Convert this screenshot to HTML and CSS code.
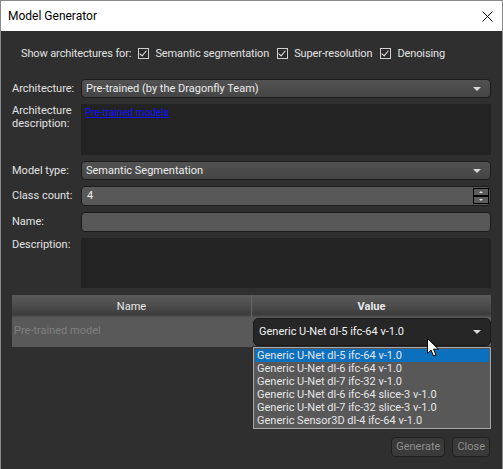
FILE: index.html
```html
<!DOCTYPE html>
<html lang="en">
<head>
    <meta charset="UTF-8">
    <title>Model Generator</title>
    <link rel="stylesheet" href="styles.css">
</head>
<body>
    <div class="window">
        <!-- title bar -->
        <div class="titlebar">
            <span class="title">Model Generator</span>
            <svg class="close" width="11" height="11" viewBox="0 0 11 11">
                <path d="M0.5 0.5 L10.5 10.5 M10.5 0.5 L0.5 10.5" stroke="#000" stroke-width="1"/>
            </svg>
        </div>

        <div class="content">
            <!-- filters -->
            <div class="filters">
                <span>Show architectures for:</span>
                <label class="check"><span class="box"></span>Semantic segmentation</label>
                <label class="check"><span class="box"></span>Super-resolution</label>
                <label class="check"><span class="box"></span>Denoising</label>
            </div>

            <!-- form -->
            <div class="form">
                <div class="label">Architecture:</div>
                <div class="combo">Pre-trained (by the Dragonfly Team)<span class="arrow"></span></div>

                <div class="label top">Architecture description:</div>
                <div class="textarea"><a href="#">Pre-trained models</a></div>

                <div class="label">Model type:</div>
                <div class="combo">Semantic Segmentation<span class="arrow"></span></div>

                <div class="label">Class count:</div>
                <div class="input spin">4
                    <div class="spin-buttons">
                        <div class="spin-btn up"></div>
                        <div class="spin-btn down"></div>
                    </div>
                </div>

                <div class="label">Name:</div>
                <div class="input"></div>

                <div class="label top">Description:</div>
                <div class="textarea"></div>
            </div>

            <!-- parameter table -->
            <div class="table">
                <div class="th">Name</div>
                <div class="th bold">Value</div>
                <div class="td muted">Pre-trained model</div>
                <div class="td cell-combo">
                    <div class="combo dark">Generic U-Net dl-5 ifc-64 v-1.0<span class="arrow"></span></div>
                    <ul class="popup">
                        <li class="selected">Generic U-Net dl-5 ifc-64 v-1.0</li>
                        <li>Generic U-Net dl-6 ifc-64 v-1.0</li>
                        <li>Generic U-Net dl-7 ifc-32 v-1.0</li>
                        <li>Generic U-Net dl-6 ifc-64 slice-3 v-1.0</li>
                        <li>Generic U-Net dl-7 ifc-32 slice-3 v-1.0</li>
                        <li>Generic Sensor3D dl-4 ifc-64 v-1.0</li>
                    </ul>
                    <svg class="cursor" width="13" height="20" viewBox="0 0 13 20">
                        <path d="M0.5 0.5 L0.5 15.5 L4 12 L6.5 18 L9 17 L6.5 11.2 L11.5 11.2 Z" fill="#fff" stroke="#000" stroke-width="1"/>
                    </svg>
                </div>
            </div>

            <!-- buttons -->
            <div class="buttons">
                <div class="btn">Generate</div>
                <div class="btn">Close</div>
            </div>
        </div>
    </div>
</body>
</html>
```

FILE: styles.css
```css
body {
    margin: 0;
    background: #2f2f2f;
    font-family: Roboto, "Noto Sans", sans-serif;
    font-size: 11px;
    white-space: nowrap;
}

.window {
    width: 503px;
    height: 469px;
    box-sizing: border-box;
    border: 1px solid #8a8a8a;
    border-bottom: none;
    display: flex;
    flex-direction: column;
}

/* title bar */
.titlebar {
    height: 30px;
    background: #fff;
    display: flex;
    align-items: center;
    justify-content: space-between;
    padding: 0 9px 0 7px;
    color: #000;
    font-size: 12px;
}

.close {
    margin-top: 1px;
}

.content {
    flex: 1;
    background: #2f2f2f;
    color: #e2e2e2;
    display: flex;
    flex-direction: column;
    padding: 13px 11px 12px 11px;
}

/* filters */
.filters {
    display: flex;
    align-items: center;
    gap: 7px;
    padding-left: 9px;
    height: 18px;
    letter-spacing: -0.12px;
}

.check {
    display: flex;
    align-items: center;
    gap: 6px;
    margin-right: 1px;
}

.box {
    width: 9px;
    height: 9px;
    border: 1px solid #cfcfcf;
    background: #2b2b2b;
    position: relative;
}

.box::after {
    content: "";
    position: absolute;
    left: 2px;
    top: 0px;
    width: 3px;
    height: 6px;
    border: solid #e8e8e8;
    border-width: 0 1.5px 1.5px 0;
    transform: rotate(40deg);
}

/* form */
.form {
    display: grid;
    grid-template-columns: 69px 1fr;
    grid-template-rows: 19px 51px 19px 20px 20px 50px;
    row-gap: 6px;
    margin-top: 17px;
}

.label {
    line-height: 13px;
    padding-top: 3px;
    white-space: normal;
}

.label.top {
    padding-top: 0;
}

.combo {
    position: relative;
    box-sizing: border-box;
    border: 1px solid #1c1c1c;
    border-radius: 4px;
    background: linear-gradient(#525252, #454545);
    padding-left: 4px;
    line-height: 17px;
    color: #ececec;
}

.arrow {
    position: absolute;
    right: 9px;
    top: 7px;
    width: 0;
    height: 0;
    border-left: 4px solid transparent;
    border-right: 4px solid transparent;
    border-top: 4px solid #d8d8d8;
}

.textarea {
    background: #232323;
    padding: 3px 4px;
    font-size: 10px;
}

.textarea a {
    color: #1010ff;
}

.input {
    position: relative;
    box-sizing: border-box;
    border: 1px solid #1c1c1c;
    border-radius: 4px;
    background: #585858;
    padding-left: 5px;
    line-height: 18px;
    color: #ececec;
}

.spin-buttons {
    position: absolute;
    right: 1px;
    top: 1px;
    display: flex;
    flex-direction: column;
}

.spin-btn {
    width: 14px;
    height: 6px;
    border: 1px solid #000;
    background: #5c5c5c;
    position: relative;
}

.spin-btn::after {
    content: "";
    position: absolute;
    left: 5px;
    width: 0;
    height: 0;
    border-left: 2px solid transparent;
    border-right: 2px solid transparent;
}

.spin-btn.up::after {
    top: 2px;
    border-bottom: 2px solid #ddd;
}

.spin-btn.down::after {
    top: 2px;
    border-top: 2px solid #ddd;
}

/* table */
.table {
    display: grid;
    grid-template-columns: 240px 1fr;
    grid-template-rows: 23px 29px;
    margin-top: 7px;
}

.th {
    background: linear-gradient(#5a5a5a, #4d4d4d 45%, #3c3c3c 85%, #5c5c5c);
    text-align: center;
    line-height: 23px;
    color: #e8e8e8;
    border-right: 1px solid #666;
}

.th.bold {
    font-weight: bold;
    border-right: none;
}

.td {
    background: #595959;
    line-height: 25px;
    padding-left: 2px;
}

.td.muted {
    color: #808080;
}

.cell-combo {
    position: relative;
    padding: 0;
    background: #595959;
}

.combo.dark {
    background: #262626;
    height: 28px;
    line-height: 26px;
    padding-left: 5px;
    margin-left: 1px;
    color: #f2f2f2;
    border-color: #1a1a1a;
    border-radius: 5px;
}

.combo.dark .arrow {
    top: 11px;
}

.popup {
    position: absolute;
    top: 29px;
    left: 1px;
    right: 0;
    margin: 0;
    padding: 1px;
    list-style: none;
    background: #585858;
    border: 1px solid #a8a8a8;
    outline: 1px solid #2a2a2a;
}

.popup li {
    line-height: 13px;
    padding-left: 2px;
    color: #e6e6e6;
}

.popup li.selected {
    background: #0b70be;
}

.cursor {
    position: absolute;
    left: 175px;
    top: 20px;
}

/* buttons */
.buttons {
    margin-top: auto;
    display: flex;
    justify-content: flex-end;
    gap: 7px;
    padding-right: 1px;
}

.btn {
    height: 20px;
    box-sizing: border-box;
    border: 1px solid #202020;
    border-radius: 4px;
    background: #3a3a3a;
    color: #8f8f8f;
    line-height: 18px;
    padding: 0 4px;
}
```
